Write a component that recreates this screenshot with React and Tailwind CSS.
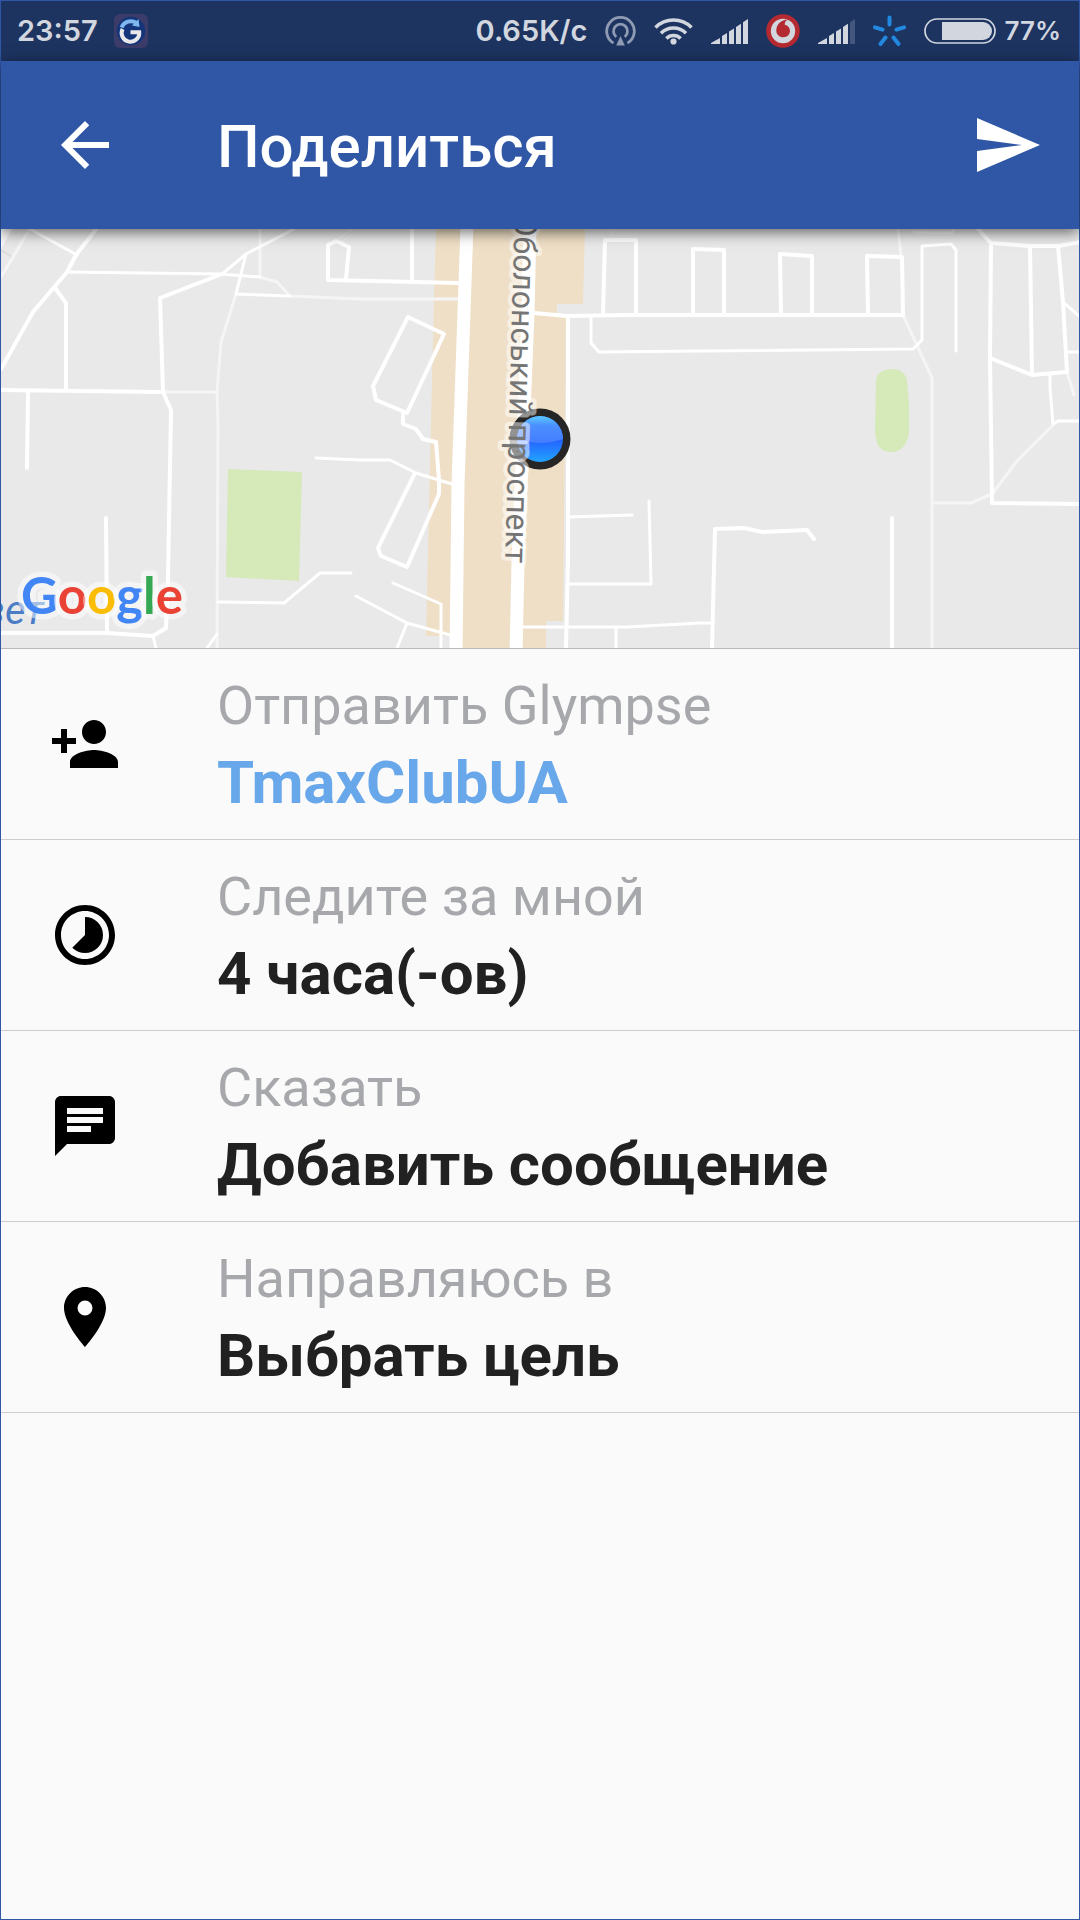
import React from "react";
import {
  MdArrowBack,
  MdChat,
  MdPersonAdd,
  MdPlace,
  MdSend,
  MdTimelapse,
} from "react-icons/md";

const rows = [
  {
    icon: MdPersonAdd,
    label: "Отправить Glympse",
    value: "TmaxClubUA",
    valueClass: "text-[#68a8ea]",
  },
  {
    icon: MdTimelapse,
    label: "Следите за мной",
    value: "4 часа(-ов)",
    valueClass: "text-[#212121]",
  },
  {
    icon: MdChat,
    label: "Сказать",
    value: "Добавить сообщение",
    valueClass: "text-[#212121]",
  },
  {
    icon: MdPlace,
    label: "Направляюсь в",
    value: "Выбрать цель",
    valueClass: "text-[#212121]",
  },
];

const GlympseIcon = () => (
  <svg width="34" height="34" viewBox="0 0 34 34" fill="none">
    <rect width="34" height="34" rx="6" fill="#3b3c69" />
    <circle cx="17" cy="17" r="14.2" fill="#14357a" />
    <path
      d="M8.6 15a8.8 8.8 0 1 0 16.6 3.2H16.5"
      stroke="#e8e8ea"
      strokeWidth="4"
    />
    <path d="M7.5 13.5C10 7.5 17 5.5 22.5 9" stroke="#7fb8ee" strokeWidth="4" />
    <path d="M24.5 5L25.5 13L18 11.5Z" fill="#7fb8ee" />
  </svg>
);

const HotspotIcon = () => (
  <svg width="31" height="30" viewBox="0 0 31 30" fill="none">
    <g stroke="#8f9ab3" strokeWidth="2.8">
      <path d="M8.5 27.1A13.8 13.8 0 1 1 22.5 27.1" />
      <path d="M11.3 20.8A7 7 0 1 1 19.7 20.8" />
    </g>
    <path d="M15.5 20L19.8 29.5H11.2Z" fill="#8f9ab3" />
  </svg>
);

const WifiIcon = () => (
  <svg width="39" height="28" viewBox="0 0 39 28" fill="none">
    <g stroke="#d2d6df" strokeWidth="3.6">
      <path d="M1.5 10.5A25.5 25.5 0 0 1 37.5 10.5" />
      <path d="M7 16.2A17.7 17.7 0 0 1 32 16.2" />
      <path d="M12.4 21.4A10 10 0 0 1 26.6 21.4" />
    </g>
    <circle cx="19.5" cy="24.5" r="3.1" fill="#d2d6df" />
  </svg>
);

const SignalIcon = ({ weak }) => (
  <svg width="37" height="25" viewBox="0 0 37 25" fill="#d2d6df">
    <path d="M0 25V24L9 19V25Z" />
    <path d="M11 25V17L16 14V25Z" />
    <path d="M18 25V12.5L23 9.5V25Z" />
    <path d="M25 25V8L30 4.7V25Z" />
    <path d="M32 25V3.3L37 0V25Z" fill={weak ? "#43577f" : "#d2d6df"} />
  </svg>
);

const VodafoneIcon = () => (
  <svg width="34" height="34" viewBox="0 0 34 34">
    <circle cx="17" cy="17" r="16.8" fill="#b42a30" />
    <circle cx="17" cy="17" r="12.2" fill="#d2d6df" />
    <path
      d="M22 5.5C19.5 6.5 18.5 8.5 18.8 10.8C22 11.5 24 14 24 16.8C24 20.5 21 23.3 17.3 23.3C13.3 23.3 10.3 20.4 10.3 16.5C10.3 10.5 15 5.5 22 5.5Z"
      fill="#b42a30"
    />
  </svg>
);

const KyivstarIcon = () => (
  <svg width="33" height="32" viewBox="0 0 33 32" fill="none">
    <path
      d="M16.5 2.5V9.5M23.5 14.7L31 12.3M9.5 14.7L2 12.3M20.5 22.5L25.5 29M12.5 22.5L7.5 29"
      stroke="#2389e0"
      strokeWidth="4"
      strokeLinecap="round"
    />
  </svg>
);

const BatteryIcon = () => (
  <svg width="72" height="26" viewBox="0 0 72 26" fill="none">
    <rect x="1" y="1" width="70" height="24" rx="12" stroke="#d2d6df" strokeWidth="1.7" />
    <path d="M18 4H59a9 9 0 0 1 0 18H18Z" fill="#d2d6df" />
  </svg>
);

const StatusBar = () => (
  <div className="flex h-[60px] items-center justify-between bg-[#1d3461] pr-[18px] pl-4 font-['Inter',sans-serif] text-[29px] leading-9 font-semibold text-[#d2d6df]">
    <div className="flex items-center gap-4">
      <span>23:57</span>
      <GlympseIcon />
    </div>
    <div className="flex items-center gap-[18px]">
      <span>0.65K/с</span>
      <HotspotIcon />
      <WifiIcon />
      <SignalIcon />
      <VodafoneIcon />
      <SignalIcon weak />
      <KyivstarIcon />
      <div className="flex items-center gap-2">
        <BatteryIcon />
        <span className="text-[26px]">77%</span>
      </div>
    </div>
  </div>
);

const MapView = () => (
  <svg
    viewBox="1 4 1078 419"
    className="block h-auto w-full border-b border-[#b9b9b9] bg-[#e9e9e9]"
    role="img"
    aria-label="Карта"
  >
    <defs>
      <linearGradient id="dot" x1="0" y1="0" x2="0" y2="1">
        <stop offset="0" stopColor="#5ccbff" />
        <stop offset="0.35" stopColor="#4b90ff" />
        <stop offset="1" stopColor="#447cff" />
      </linearGradient>
      <linearGradient id="dotBase" x1="0" y1="0" x2="0" y2="1">
        <stop offset="0.5" stopColor="#2460ff" />
        <stop offset="1" stopColor="#22a4ff" />
      </linearGradient>
    </defs>

    {/* blocks and parks */}
    <path d="M1 4H12L1 24Z" fill="#f8f8f8" />
    <path d="M1 25L12 32" stroke="#e0ddd8" strokeWidth="2" />
    <path
      d="M436 4H585L583 79H557V89L566 91L563 396H546V423H450V411H426L434 70Z"
      fill="#efdfc6"
    />
    <path d="M228 244L302 247L299 356L226 352Z" fill="#d5e9b9" />
    <path
      d="M876 155C877 149 882 144 892 144S905 149 907 155L909 180V209C906 220 902 227 891 227S876 220 875 207Z"
      fill="#d5e9b9"
    />

    <g fill="none" strokeLinejoin="round" strokeLinecap="round">
      {/* footpaths */}
      <g stroke="#f5f5f5" strokeWidth="3">
        <path d="M28 7L1 52" />
        <path d="M260 52L277 57L290 71L360 74H458" />
        <path d="M260 4V52" />
        <path d="M236 69L221 117L217 167L218 200L217 423" />
        <path d="M163 167H217" />
        <path d="M336 16L352 4M340 18L352 9" strokeWidth="1" />
        <path d="M610 14L614 4" strokeWidth="1" />
        <path d="M898 4L901 32M903 90L932 153V423" />
        <path d="M914 7L952 8L954 4" />
        <path d="M932 278H971L992 269L1017 236L1054 199" />
        <path d="M1067 147L1074 170" />
      </g>

      {/* side streets */}
      <g stroke="#ffffff" strokeWidth="3">
        <path d="M30 4L77 30" />
        <path d="M68 47L220 49L260 52" />
        <path d="M153 411L156 423M217 409L207 423" />
        <path d="M222 49L246 29L294 4" />
        <path d="M246 29L236 69L290 71" />
        <path d="M218 377L284 378L320 348H351" />
        <path d="M316 233L360 235H390L416 248L452 259" />
        <path d="M356 371L407 398L450 410M407 398L397 423" />
        <path d="M393 358L441 379V423" />
        <path d="M591 93V118L599 127L700 126L913 124L922 115V21L951 19L956 25V126" />
        <path d="M568 292L632 290M570 359H651L649 276" />
        <path d="M523 402H627L700 398H713M616 402V423" />
        <path d="M1063 77L1080 92M1067 127H1080" />
        <path d="M1050 148V163L1053 199L1058 196H1080" />
      </g>
      <g stroke="#ffffff" strokeWidth="4">
        <path d="M97 3L76 30L67 47L33 87L1 144" />
        <path d="M55 63L66 78V165" />
        <path d="M1 165L163 167L171 185L168 353L166 403L153 411L107 408H1" />
        <path d="M163 167L160 73L222 49" />
        <path d="M28 167L27 243M106 293L107 407" />
        <path d="M346 54L349 22L336 16L328 20V55L458 58" />
        <path d="M412 4V57" />
        <path d="M408 92L444 109L407 188L376 175L373 161Z" />
        <path d="M403 188V199L416 204L423 214L436 217L439 255V269L407 342L381 331L378 323L415 248" />
        <path d="M534 88L567 91L627 90H903" />
        <path d="M568 91V333L566 423" />
        <path d="M603 90L605 15H636V90M693 90V24L724 25V90" />
        <path d="M781 90L780 29L812 31V90M868 90L867 31L902 32L903 90" />
        <path d="M978 4L991 18L1030 21H1058L1080 17" />
        <path d="M991 18L990 133L992 278L1080 279" />
        <path d="M990 133L1032 150L1067 147L1063 77L1058 21M1030 21L1032 150" />
        <path d="M892 293V423" />
        <path d="M712 423L715 304L744 303L762 307L807 305L814 314" />
      </g>

      {/* avenue */}
      <g stroke="#ffffff" strokeWidth="13">
        <path d="M467 0L465 58L458 260L456 430" />
        <path d="M530 0L528 88L518 337L516 430" />
      </g>
    </g>

    <circle cx="540" cy="214" r="30.5" fill="#262626" />
    <circle cx="540" cy="214" r="23" fill="url(#dotBase)" />
    <path d="M517 214A23 23 0 0 1 563 214Q540 222 517 214Z" fill="url(#dot)" />

    <text
      x="505"
      y="338"
      transform="rotate(91.6 505 338)"
      textAnchor="end"
      className="font-['Roboto',sans-serif] text-[32px]"
      fill="#757575"
      stroke="#ffffff"
      strokeOpacity="0.5"
      strokeWidth="8"
      strokeLinejoin="round"
      paintOrder="stroke"
    >
      Оболонський проспект
    </text>
    <text
      x="44"
      y="399"
      textAnchor="end"
      className="font-['Roboto',sans-serif] text-[40px] italic"
      fill="#4a7dc6"
    >
      вет
    </text>
    <text
      x="21"
      y="389"
      className="font-['Lato',sans-serif] text-[51px] font-bold"
      stroke="#ffffff"
      strokeOpacity="0.5"
      strokeWidth="11"
      strokeLinejoin="round"
      paintOrder="stroke"
    >
      <tspan fill="#4285f4">G</tspan>
      <tspan fill="#ea4335">o</tspan>
      <tspan fill="#fbbc05">o</tspan>
      <tspan fill="#4285f4">g</tspan>
      <tspan fill="#34a853">l</tspan>
      <tspan fill="#ea4335">e</tspan>
    </text>
  </svg>
);

const Row = ({ icon: Icon, label, value, valueClass }) => (
  <li className="border-b border-[#cdcdcd]">
    <button
      type="button"
      className="flex w-full items-center gap-24 px-12 text-left"
    >
      <Icon className="size-[72px] shrink-0 text-black" />
      <span className="flex flex-col pt-5 pb-4">
        <span className="text-[54px] leading-[74px] text-[#a7a8ac]">
          {label}
        </span>
        <span className={`text-[60px] leading-[80px] font-bold ${valueClass}`}>
          {value}
        </span>
      </span>
    </button>
  </li>
);

const App = () => {
  return (
    <div className="min-h-screen border border-[#3057a6] bg-[#fafafa] font-['Roboto',sans-serif]">
      <StatusBar />
      <header className="relative z-10 flex h-[168px] items-center bg-[#3057a6] pr-9 pl-12 text-white shadow-[0_3px_14px_rgba(0,0,0,0.6)]">
        <button type="button" aria-label="Назад" className="mr-24">
          <MdArrowBack className="size-[72px]" />
        </button>
        <h1 className="flex-1 pt-1 text-[60px] leading-[80px] font-medium">
          Поделиться
        </h1>
        <button type="button" aria-label="Отправить">
          <MdSend className="size-[72px]" />
        </button>
      </header>
      <main>
        <MapView />
        <ul>
          {rows.map((row) => (
            <Row key={row.label} {...row} />
          ))}
        </ul>
      </main>
    </div>
  );
};

export default App;
